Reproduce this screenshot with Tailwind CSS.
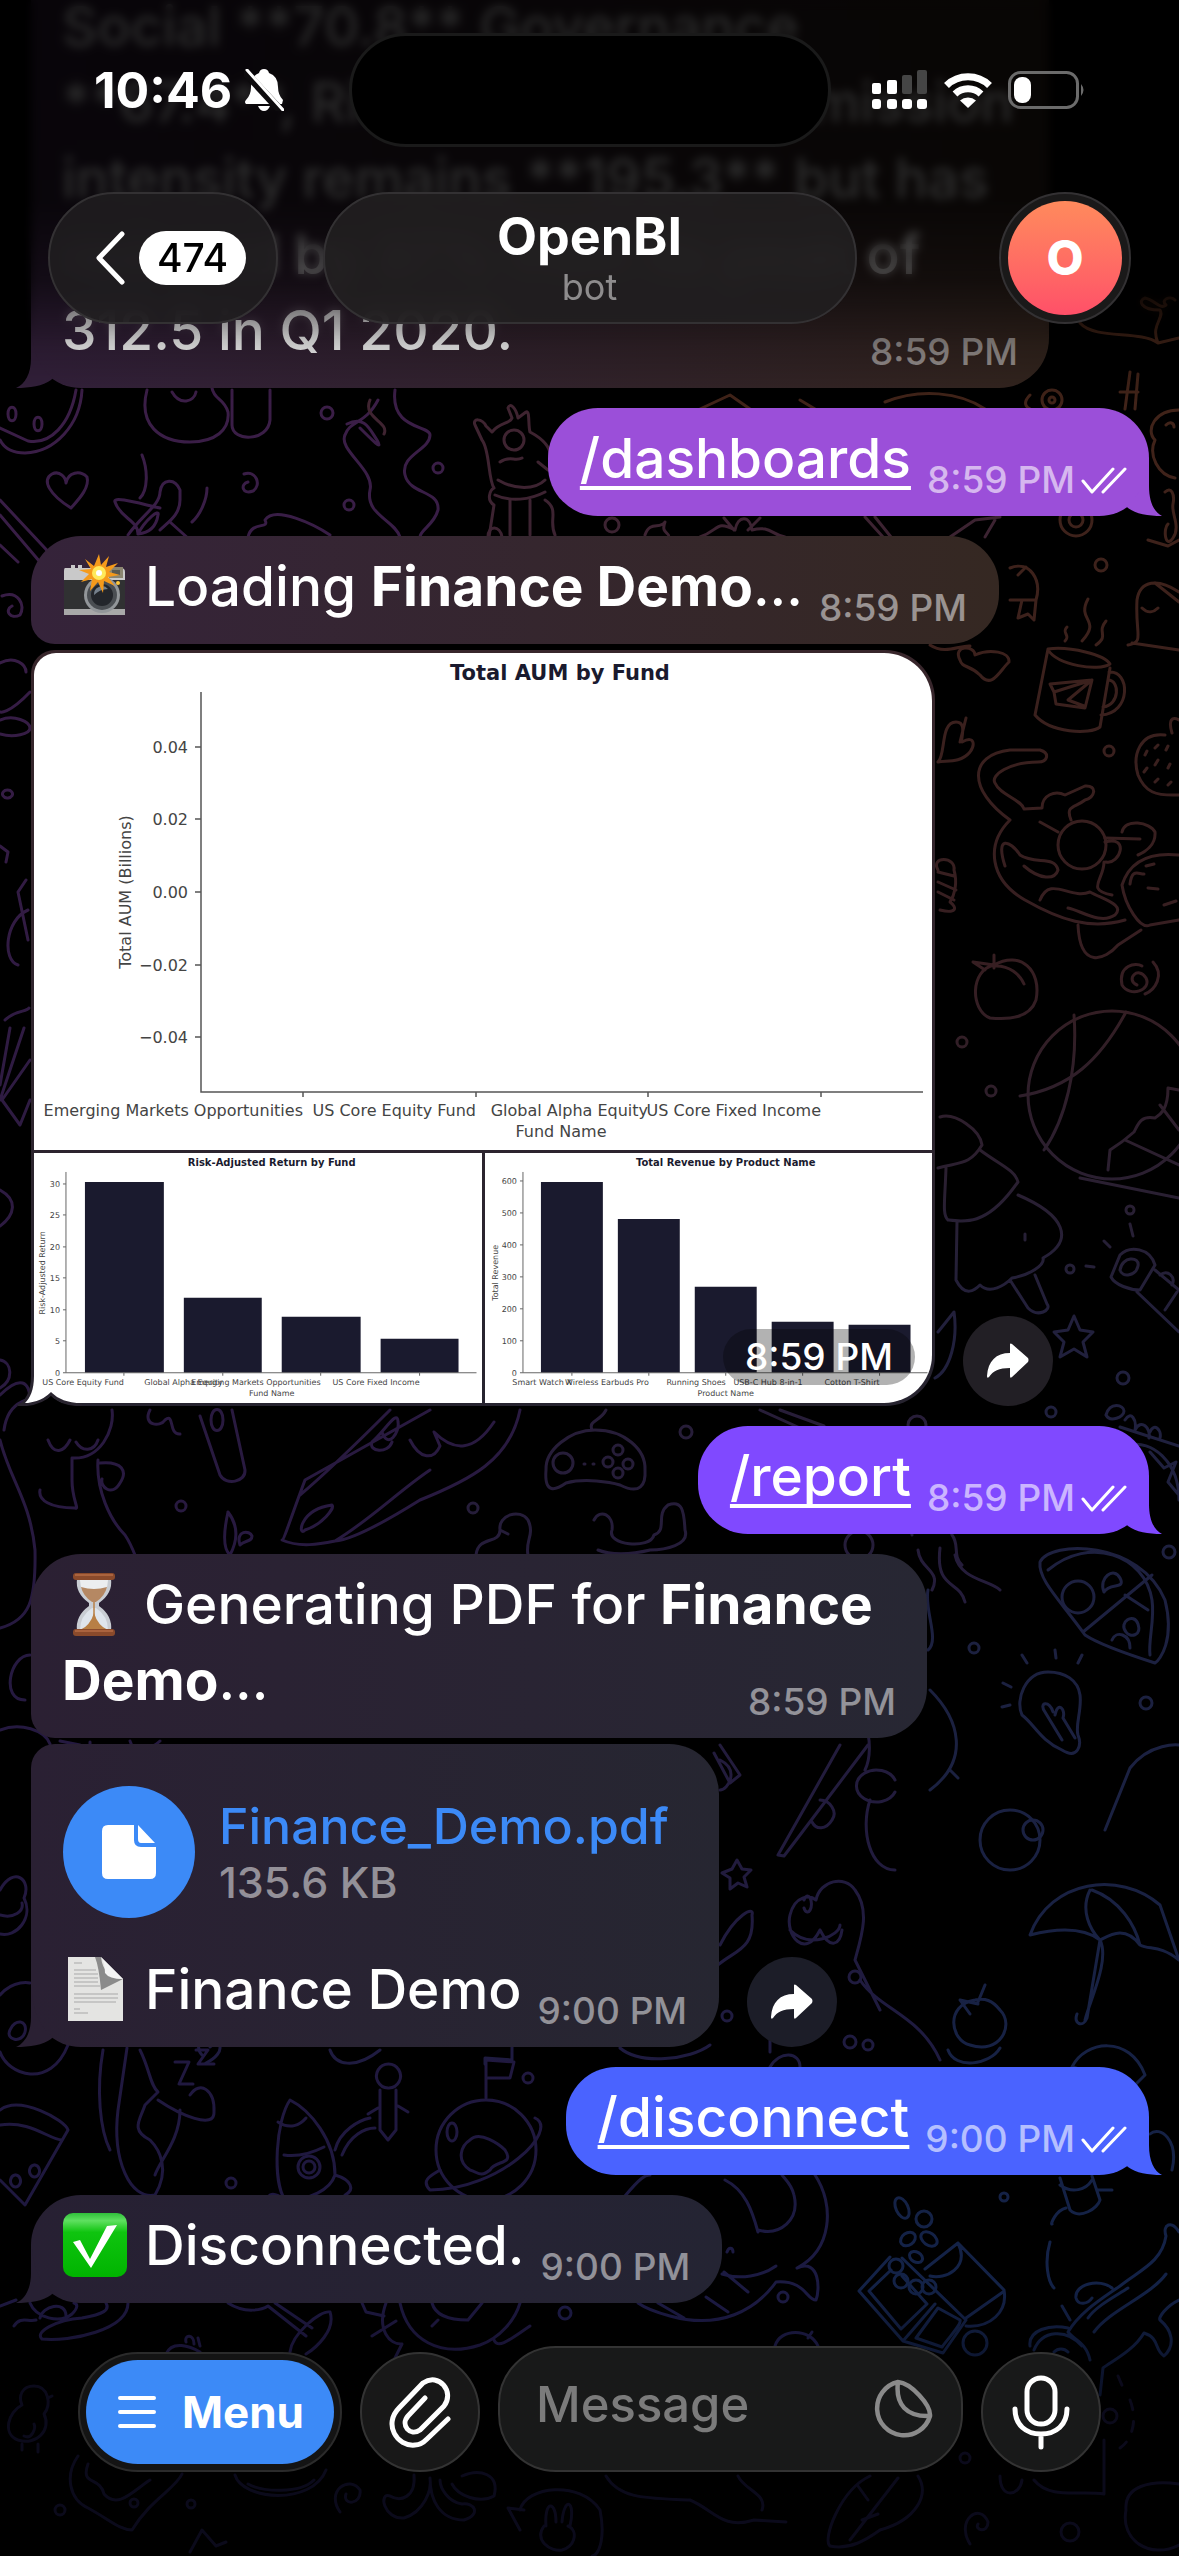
<!DOCTYPE html>
<html lang="en">
<head>
  <meta charset="UTF-8">
  <meta name="viewport" content="width=device-width, initial-scale=1">
  <title>OpenBI</title>
  <script src="https://cdn.jsdelivr.net/npm/@tailwindcss/browser@4"></script>
</head>
<body class="bg-black text-white font-['Inter',sans-serif]">
<div class="relative flex flex-col min-h-screen overflow-hidden">

  <!-- wallpaper -->
  <svg class="absolute inset-0 w-full h-full" viewBox="0 0 1179 2556" preserveAspectRatio="xMidYMin slice" fill="none" stroke-width="3" stroke-linecap="round" stroke-linejoin="round" opacity=".9" aria-hidden="true">
    <defs>
      <linearGradient id="wl" gradientUnits="userSpaceOnUse" x1="0" y1="380" x2="0" y2="2556"><stop offset="0" stop-color="#42224f"/><stop offset=".45" stop-color="#2f1d48"/><stop offset=".88" stop-color="#211b46"/><stop offset="1" stop-color="#050510"/></linearGradient>
      <linearGradient id="wm" gradientUnits="userSpaceOnUse" x1="0" y1="380" x2="0" y2="2556"><stop offset="0" stop-color="#472836"/><stop offset=".5" stop-color="#2b2140"/><stop offset=".88" stop-color="#1f1d4a"/><stop offset="1" stop-color="#050510"/></linearGradient>
      <linearGradient id="wr" gradientUnits="userSpaceOnUse" x1="0" y1="300" x2="0" y2="2556"><stop offset="0" stop-color="#4a281a"/><stop offset=".3" stop-color="#3c2226"/><stop offset=".46" stop-color="#252444"/><stop offset=".88" stop-color="#16264f"/><stop offset=".95" stop-color="#080b1c"/><stop offset="1" stop-color="#03050f"/></linearGradient>
    </defs>
    <g stroke="url(#wl)">
      <path d="M82 390C80 425 55 452 25 453C10 453 3 446 0 440M76 390C70 425 50 445 28 441L0 428M8 414c0-9 8-9 8 0s-8 9-8 0M34 424c0-9 8-9 8 0s-8 9-8 0"/>
      <path d="M147 390C138 425 160 442 190 442C215 442 230 430 228 412C224 398 214 400 212 388M232 390V425C232 442 268 442 270 420V390M172 392c8 14 22 10 24 0"/>
      <circle cx="327" cy="413" r="6"/><circle cx="349" cy="505" r="5"/><circle cx="438" cy="468" r="5"/>
      <path d="M378 400C365 425 350 420 345 435C338 450 375 470 370 490C365 515 395 520 400 537M395 390C390 430 430 425 430 435C430 450 400 455 405 475C410 495 440 490 438 510C434 525 420 530 420 537M347 424C365 415 370 430 377 440C384 452 372 440 360 428"/>
      <path d="M71 508C50 495 41 480 52 474C60 470 66 478 66 483C68 472 80 470 87 477C90 488 78 500 71 508Z"/>
      <path d="M244 474C256 470 262 485 253 491C242 495 240 484 248 482"/>
      <path d="M128 535C142 515 160 505 160 492C162 478 175 478 180 490L180 500C180 515 168 522 160 530M160 508C145 505 112 495 115 502C120 518 138 520 138 534M138 534C145 520 160 508 158 515C156 528 148 533 138 534M142 455C148 470 148 490 140 498M207 488C207 500 200 515 192 522M170 522L190 540"/>
      <path d="M0 500L56 560M0 515L40 562M0 545L18 562"/>
      <path d="M248 537C252 520 270 530 265 520C275 505 315 525 330 535M2 596C18 590 26 605 20 615C10 620 4 610 12 606"/>
      <path d="M0 663C15 655 26 665 26 672M30 692C8 715 0 712 0 712M0 720c14-6 30 2 30 8s-16 10-30 6M8 798a5 4 0 1 0-1 0M0 846l8 6-2 10M26 880L18 892 28 940M28 910C5 920 2 960 18 965M5 1020c10-10 22-8 24-12M10 1028L0 1085M24 1028L0 1100M30 1060L2 1100L20 1125L30 1100"/>
      <path d="M0 1190C18 1200 15 1215 0 1226M0 1360c12 2 14 20 0 28M0 1395c20-20 30-14 30 6M4 1430C8 1400 30 1395 55 1400"/>
      <path d="M0 1440C10 1480 30 1500 35 1550C36 1600 30 1620 0 1628M112 1410C115 1430 100 1460 72 1458V1480C72 1500 80 1510 75 1508C50 1508 38 1500 40 1490M48 1440c6 16 16 12 22 0M76 1442c6 10 18 10 22-2M100 1463c22-2 28 8 20 20c-8 14-20 4-18-4M98 1460C96 1490 110 1520 125 1535C135 1550 140 1570 150 1600"/>
      <path d="M150 1410C142 1425 160 1428 165 1420C175 1412 168 1435 180 1434M200 1416L220 1475C226 1486 246 1482 245 1470L232 1410M211 1420c0-14 12-14 12 0s-12 14-12 0"/>
      <circle cx="181" cy="1506" r="5"/>
      <path d="M430 1410L305 1480C290 1520 284 1540 282 1540C300 1548 320 1544 335 1541C370 1520 400 1490 430 1470M390 1410C360 1440 330 1470 300 1495M520 1410C510 1460 470 1480 420 1500C380 1525 350 1540 335 1541M305 1530C298 1538 298 1510 332 1505C335 1508 322 1525 305 1530M382 1432c6 18 18 0 16-10c0-14-14 10-26 20c-4 10 16 12 20 0M410 1440c10 20 24 20 30 6l-6-14c20 20 40 20 60-10"/>
      <path d="M228 1512C224 1530 222 1548 230 1555C238 1540 238 1525 228 1512M240 1545C235 1530 250 1530 252 1536C252 1542 245 1540 240 1545"/>
      <path d="M30 1655C10 1655 0 1700 25 1700M0 1730c20-8 45 0 50 14M60 1741l20 4M90 1742v20M130 1741c2 10 20 10 30 0"/>
      <path d="M0 1890c14-25 32-10 24 8c10 20-8 40-24 36M0 1915c14 4 24-4 22-12M0 1995c14-16 30-12 30-12M10 2030c5-12 18-10 15 2s-20 8-15-2M0 2052C8 2075 50 2090 68 2045"/>
      <path d="M127 2048L118 2110C112 2160 130 2200 155 2195C170 2170 160 2150 150 2140C130 2130 140 2120 145 2105L158 2092C150 2085 150 2070 140 2050M103 2050C96 2090 100 2130 110 2150M158 2100C180 2115 215 2130 214 2112C215 2090 200 2080 190 2095M180 2110C180 2140 160 2160 155 2175M175 2062h14l-10 22h14M196 2050h12l-10 14h16"/>
      <path d="M0 2110C20 2095 65 2120 68 2130L25 2205L0 2180M0 2125C30 2120 50 2140 62 2140M34 2165a5 6 0 1 0 1 0M15 2175a5 6 0 1 0 1 0"/>
      <path d="M290 2100C276 2120 272 2180 285 2200C310 2200 330 2190 335 2175C335 2140 310 2110 290 2100ZM278 2122C290 2130 300 2125 306 2118M284 2155c14 2 28-2 40-8M335 2175C352 2180 355 2190 345 2195M285 2200C272 2190 268 2195 268 2200"/>
      <circle cx="309" cy="2167" r="11"/><circle cx="309" cy="2167" r="6"/><circle cx="231" cy="2183" r="5"/>
      <path d="M388 2088a12 12 0 1 1 1 0M378 2108l-10 6M398 2106l10 6M380 2090V2130l8 10 8-10V2090M335 2150C340 2130 360 2120 370 2118M342 2155C350 2135 365 2128 375 2128"/>
      <circle cx="486" cy="2150" r="50"/>
      <path d="M486 2098V2060L514 2062L510 2078L488 2078M470 2170C455 2160 462 2145 470 2140C480 2130 500 2145 505 2150C515 2165 495 2160 490 2170C480 2178 478 2172 470 2170M535 2118C560 2130 500 2190 430 2190C420 2180 432 2175 440 2170"/>
      <ellipse cx="452" cy="2132" rx="5" ry="9"/><circle cx="528" cy="2078" r="5"/>
      <path d="M30 2303C36 2318 60 2324 72 2314C78 2308 78 2304 74 2303M40 2318C42 2306 66 2300 66 2316M0 2306L16 2300M14 2326C20 2316 28 2322 36 2320M128 2303C128 2330 70 2342 42 2339C34 2332 56 2320 82 2318C104 2314 110 2310 106 2303M228 2303C245 2314 262 2310 268 2306L306 2336M275 2303L312 2328M290 2352C292 2334 320 2310 330 2312C336 2330 316 2348 306 2354M362 2303L366 2312L384 2316M400 2303C408 2340 440 2358 480 2345C500 2338 515 2320 520 2303M386 2303C376 2330 390 2345 402 2344L394 2360M432 2303C436 2318 456 2320 468 2320L482 2303M372 2336L396 2321M432 2326l6-6M494 2340C498 2350 512 2338 530 2326M166 2354C172 2340 190 2346 200 2352M186 2342C184 2334 194 2334 194 2344M198 2338l2 8"/>
    </g>
    <g stroke="url(#wm)">
      <path d="M489 537L494 505C486 500 490 490 494 488C488 480 490 450 482 440L475 425C472 418 482 418 486 426L492 432C500 422 510 424 512 418L508 408C510 402 516 408 518 418L526 412C530 410 528 425 530 432C545 440 552 450 550 460M495 495C510 502 530 500 545 492M498 480C515 490 535 490 545 480M500 462C510 455 515 462 522 458"/>
      <circle cx="514" cy="440" r="10"/><path d="M538 462l10 8M510 500V535M530 500V535M545 500C560 510 548 520 555 535M488 537c0-12 12-12 14 0M370 400c-8 18 20 22 14 34"/>
      <path d="M645 535C650 520 660 530 665 522C660 535 672 532 668 538M700 537C720 530 715 520 735 530C738 515 750 515 752 530C770 525 772 535 785 537M724 518l10 12M760 518l-12 12M865 517l18 20M875 517l16 20"/>
      <circle cx="612" cy="525" r="7"/>
      <path d="M950 537L975 520L1000 517M985 537L995 520"/>
      <path d="M595 1430C570 1430 545 1450 546 1470C544 1495 556 1490 566 1483C585 1478 610 1482 620 1485C640 1495 646 1485 645 1470C646 1450 625 1430 595 1430ZM592 1430C588 1420 600 1422 606 1410M584 1464h1M593 1464h1"/>
      <circle cx="563" cy="1463" r="10"/><circle cx="618" cy="1450" r="5"/><circle cx="608" cy="1462" r="5"/><circle cx="628" cy="1464" r="5"/><circle cx="618" cy="1473" r="5"/><circle cx="686" cy="1432" r="6"/><circle cx="473" cy="1508" r="5"/>
      <path d="M476 1555C478 1535 500 1545 500 1530C498 1515 520 1508 528 1520C535 1535 525 1540 528 1555M500 1530l8 4M594 1520C600 1508 614 1515 612 1530C606 1545 650 1550 654 1535C668 1530 655 1515 668 1505C682 1500 684 1510 685 1530C690 1545 665 1550 650 1550C630 1555 610 1555 598 1550"/>
      <circle cx="859" cy="1545" r="14"/><path d="M912 1535c-6-30 36-30 40 0c8 10 0 20 10 30M918 1550c2 20 24 20 14 40M940 1548C935 1590 960 1580 965 1602M955 1555C960 1580 990 1580 1000 1590M925 1530h5M940 1530h5M760 1410l40 18M780 1410l44 16"/>
      <circle cx="917" cy="1425" r="9"/>
      <path d="M720 1745l20 30-10 8-16-30M720 1760c20 10 8 30 0 30M840 1745L778 1855L784 1856L800 1835L868 1745M820 1800c10 0 18 12 12 20c-6 10-16 10-20 2M737 1860l5 9 9 1-7 7 3 10-9-4-8 6v-11l-8-5 10-4Z"/>
      <path d="M895 1700C880 1680 850 1690 864 1720C872 1740 870 1760 865 1770M895 1780a20 16 0 1 0 0 12M870 1800C860 1830 870 1870 895 1870"/>
      <path d="M820 1930C805 1960 785 1935 790 1915C795 1895 810 1895 816 1900C820 1880 845 1875 855 1890C870 1910 862 1935 855 1960L880 2010M820 1930C830 1950 840 1945 842 1930M790 1930C810 1950 840 1935 840 1925M804 1900a4 8 0 1 1 0 8M720 1945C735 1915 755 1905 752 1915C755 1950 735 1950 718 1965M770 2052V2010M860 1980C880 2010 920 2015 940 2060"/>
      <circle cx="850" cy="2042" r="6"/><circle cx="868" cy="2045" r="5"/><circle cx="855" cy="1977" r="6"/><circle cx="727" cy="2016" r="5"/>
      <path d="M202 2055c-10-10 5-25 8-8c10-10 18 5-4 16M330 2050c5 15 25 20 50 0M485 2064V2058L512 2060V2047M620 2048C640 2065 690 2060 710 2045M770 2067C780 2050 800 2052 800 2067M625 2196C640 2178 645 2175 650 2175M725 2180C745 2190 752 2210 758 2232M758 2230C780 2236 800 2220 794 2195C792 2185 786 2180 782 2175M815 2175C835 2205 832 2250 797 2268C820 2258 820 2290 816 2300C806 2300 806 2280 776 2282C756 2310 720 2330 670 2316C655 2312 645 2308 638 2303M722 2274C740 2280 762 2276 776 2266M724 2272L748 2292M706 2297L728 2312M658 2303L684 2318M727 2252c2-6 6-4 6 0"/>
      <circle cx="783" cy="2297" r="5"/><circle cx="565" cy="2313" r="6"/><path d="M775 2346C780 2328 810 2328 818 2346M808 2338l4-6"/>
    </g>
    <g stroke="url(#wr)">
      <path d="M1080 323C1095 340 1140 330 1158 343L1179 338M1158 343C1150 325 1165 318 1160 310C1140 310 1138 300 1145 298C1155 300 1160 310 1166 305C1160 300 1170 295 1175 300M1130 372L1125 409M1138 374L1135 409M1120 392h18"/>
      <circle cx="1052" cy="400" r="10"/><circle cx="1052" cy="400" r="3"/><path d="M1030 395c-10 10 0 14 0 14M885 402C920 388 960 392 985 409M700 409l30-14 20 14M800 400l15 9"/>
      <path d="M1179 410C1155 410 1145 430 1155 440C1148 455 1158 475 1175 478M1166 425c4-4 8-2 8 2M1165 492c6-6 10 2 8 12s8 22 0 34s-10-10-5-14"/>
      <circle cx="1076" cy="520" r="16"/><circle cx="1076" cy="520" r="7"/><circle cx="1101" cy="565" r="6"/>
      <path d="M1010 568C1030 560 1042 580 1036 600L1010 600M1018 575l8-8M1022 600l-4 18 10-4 6 6 2-20M1148 540l20 6 11-6"/>
      <path d="M1065 641c6-6-4-8 2-14M1082 641c20-22-6-20 6-42M1096 645c14-10 0-12 10-24M1048 649L1035 715C1050 733 1090 735 1100 727L1110 668M1048 649C1070 646 1105 655 1110 664C1098 672 1058 665 1048 650M1109 672C1130 670 1132 713 1101 715M1108 680C1120 680 1120 705 1103 707M1050 684L1092 680L1085 708L1056 704L1054 692ZM1054 692L1092 680L1068 700L1084 706"/>
      <path d="M1128 645C1145 642 1135 635 1137 600C1140 580 1158 578 1179 592M1132 643L1179 650M1142 608c6 6 12 4 16 0M1155 583L1179 602"/>
      <path d="M930 645C945 655 960 645 970 646M960 660C952 645 975 645 975 655C990 648 1010 652 1009 662C1000 670 992 690 980 675C970 665 962 668 960 660"/>
      <path d="M938 762C946 755 940 722 956 722C968 722 960 740 962 742C975 735 975 745 970 752C960 764 945 760 938 762M960 742L966 718"/>
      <path d="M1010 820C968 790 968 755 1010 750L1040 750C1050 753 1048 762 1038 762C1010 762 990 775 995 783C1000 795 1022 800 1024 809L1042 808C1042 795 1055 790 1065 795L1085 786C1098 785 1095 798 1085 800C1075 808 1065 805 1071 820M1040 822L1058 832M1010 820C985 845 990 880 1025 900C1060 920 1090 930 1125 920M1005 866C995 835 1010 840 1020 855C1035 865 1055 855 1058 870C1055 880 1040 880 1024 866M1040 900C1050 875 1070 900 1090 892C1105 900 1125 905 1115 915C1100 925 1080 910 1068 908M1078 925C1080 970 1105 960 1118 945L1141 930"/>
      <ellipse cx="1082" cy="845" rx="24" ry="24"/><path d="M1105 838L1140 839M1122 832C1125 818 1150 822 1155 832C1156 845 1145 852 1138 855M1105 842C1130 835 1120 865 1106 862M1104 862C1104 880 1085 890 1112 895M1179 855C1150 852 1130 860 1122 885C1125 905 1140 930 1150 925L1179 920M1130 884c2-16 8-10 14-10M1148 888l10 1M1146 866l8-2M1164 905l12-4"/>
      <path d="M1165 735C1140 732 1132 755 1138 775C1145 792 1155 796 1179 795M1172 733C1168 720 1172 716 1179 720M1145 755l2-4M1155 748l3-3M1166 750l2-4M1144 772l3-4M1155 765l3-5M1168 768l2-4M1155 782l3-3M1168 785l3-3"/>
      <path d="M938 870c-8-14 18-14 16 0c4 14 0 26-4 32c8 6 6 12-10 8M938 882l18 8M938 892l16 8M938 872l16 4"/>
      <path d="M994 965C970 970 970 1010 990 1018C1010 1020 1030 1018 1036 1000C1042 970 1020 950 994 965ZM994 955V968M994 966C1010 965 1020 975 1024 984M994 965L973 962L985 970"/>
      <path d="M1137 985C1125 980 1138 965 1146 978C1152 990 1130 998 1122 985C1118 965 1136 962 1142 966M1153 962C1165 975 1155 990 1145 994"/>
      <circle cx="1112" cy="1095" r="84"/><path d="M1074 1015C1078 1070 1065 1120 1044 1150M1020 1096C1070 1088 1100 1060 1126 1012M1179 1090L1168 1088C1168 1110 1160 1115 1155 1118C1140 1115 1138 1125 1134 1132C1125 1140 1118 1145 1110 1150L1108 1170M1125 1140L1179 1165M1080 1178L1179 1198M1160 1105L1179 1130"/>
      <circle cx="962" cy="1042" r="5"/><circle cx="991" cy="1091" r="5"/><circle cx="1109" cy="751" r="5"/><circle cx="1130" cy="1210" r="4"/><circle cx="1070" cy="1269" r="4"/><circle cx="1123" cy="1378" r="6"/><circle cx="1051" cy="1412" r="5"/>
      <path d="M940 1117C955 1112 980 1130 982 1145C970 1165 960 1162 938 1168M946 1168C945 1200 942 1215 948 1220C965 1222 985 1225 1012 1190L1018 1182C1015 1170 1000 1165 980 1150M957 1222L956 1280C965 1298 975 1290 980 1285C990 1295 1005 1285 1012 1278C1030 1275 1045 1265 1043 1258C1075 1240 1065 1215 1018 1195M1010 1280L1028 1308C1038 1318 1052 1310 1047 1304L1035 1275M1025 1234v6"/>
      <path d="M1111 1277L1120 1255C1130 1245 1150 1248 1155 1265L1140 1290C1130 1290 1115 1285 1111 1277ZM1120 1270c2-14 20-14 18-4s-16 12-18 4M1155 1270L1179 1290M1137 1292L1179 1332M1160 1275c8-6 16 2 12 10M1165 1310l12-18M1094 1267l-8-1M1110 1247l-6-6M1133 1236l-3-12"/>
      <path d="M1074 1316l6 14 13 2-10 10 4 15-13-8-14 8 4-15-10-10 14-2Z"/>
      <path d="M938 1332L954 1312C958 1340 950 1370 935 1378M1106 1415c4-14 18-10 18-4s-14 12-18 4M1125 1420c6-10 12 0 10 10M1135 1430c6-12 16-2 14 8M1150 1432c4-10 12-2 10 6"/>
      <path d="M1120 1427L1179 1446M1130 1445C1150 1440 1179 1460 1179 1500M1150 1452l14 16 12-6-8 20 10 12"/>
      <path d="M1040 1562C1050 1540 1140 1540 1165 1600C1175 1640 1160 1660 1155 1663C1130 1655 1100 1645 1085 1635C1060 1600 1038 1580 1040 1562ZM1048 1570C1090 1535 1145 1555 1152 1600C1155 1620 1148 1640 1150 1655M1083 1632L1152 1575M1125 1595L1148 1610"/>
      <circle cx="1078" cy="1597" r="16"/><path d="M1104 1592c-6-14 10-26 16-14s-10 4-16 14M1126 1632c-8-10 8-20 12-8s-8 14-12 8M1112 1640c4-10 18-6 18 8"/>
      <circle cx="974" cy="1648" r="5"/><circle cx="1169" cy="1552" r="6"/><circle cx="1146" cy="1703" r="6"/>
      <path d="M1048 1672C1025 1672 1015 1700 1022 1715C1035 1725 1040 1740 1062 1750C1078 1760 1082 1745 1078 1735C1075 1725 1082 1710 1080 1695C1078 1680 1065 1672 1048 1672ZM1062 1740L1045 1712C1038 1702 1050 1700 1053 1712M1055 1715C1058 1700 1066 1710 1063 1718L1075 1738M1003 1683l8 4M1002 1707l8-2M1022 1655l5 8M1055 1650l1 8M1082 1655l-4 8"/>
      <path d="M928 1650c12-10-4-40 0-60M930 1690C960 1720 970 1760 930 1790M950 1770l8 8"/>
      <circle cx="1010" cy="1840" r="30"/><circle cx="1033" cy="1830" r="10"/><path d="M1105 1830L1130 1768C1150 1742 1179 1745 1179 1745"/>
      <path d="M1030 1935C1050 1880 1120 1870 1160 1905L1179 1960C1160 1945 1150 1950 1140 1945C1125 1925 1110 1935 1100 1940C1080 1925 1050 1930 1030 1935ZM1090 1890C1080 1910 1090 1930 1100 1940C1110 1960 1090 2000 1085 2020M1092 1890C1120 1900 1135 1925 1140 1945M1100 1940L1087 2018c-4 10-14 6-10-4"/>
      <path d="M975 2000C945 2005 950 2040 970 2045C1000 2055 1015 2025 1000 2010C992 2000 985 1998 975 2000ZM978 2002L985 1985M978 2004l-18-4 10 14"/>
      <path d="M1072 2067C1085 2040 1130 2035 1145 2075L1130 2090C1120 2080 1100 2075 1072 2067M948 2050C955 2070 990 2065 1000 2048M1150 2134C1160 2125 1179 2140 1172 2170M1060 2178L1070 2210C1080 2220 1098 2208 1100 2200L1092 2176M1060 2185C1072 2194 1086 2190 1092 2180M1098 2190h14M1066 2208C1056 2210 1050 2225 1052 2224M1050 2242C1044 2262 1048 2282 1054 2288M1062 2306l8 14"/>
      <circle cx="1004" cy="2197" r="4"/><ellipse cx="902" cy="2208" rx="6" ry="11" transform="rotate(-25 902 2208)"/><ellipse cx="924" cy="2219" rx="8" ry="8"/><ellipse cx="908" cy="2239" rx="8" ry="6" transform="rotate(-35 908 2239)"/><ellipse cx="929" cy="2239" rx="9" ry="6" transform="rotate(35 929 2239)"/><ellipse cx="916" cy="2257" rx="7" ry="5" transform="rotate(30 916 2257)"/>
      <path d="M890 2257L859 2291L903 2341L943 2353L966 2320L902 2258M891 2270L869 2291L901 2329L927 2304L902 2276M903 2341L935 2304M938 2308L960 2320C962 2324 950 2336 942 2347L916 2338ZM925 2269L958 2243L1004 2290C1008 2312 990 2328 966 2326M958 2243C970 2268 945 2280 930 2276M1003 2292L966 2318"/>
      <circle cx="896" cy="2266" r="7"/><circle cx="901" cy="2281" r="7"/><circle cx="916" cy="2287" r="7"/><circle cx="929" cy="2287" r="7"/><circle cx="975" cy="2343" r="12"/>
      <path d="M1179 2232C1172 2220 1162 2224 1166 2236C1162 2262 1140 2270 1120 2286C1100 2300 1080 2312 1068 2332C1074 2340 1086 2342 1090 2360M1112 2288C1100 2278 1074 2284 1076 2298C1078 2306 1088 2304 1092 2298M1166 2274C1150 2296 1110 2310 1094 2332M1128 2288C1116 2296 1096 2306 1088 2318M1179 2300C1166 2306 1158 2318 1160 2320C1172 2330 1176 2345 1164 2356C1154 2350 1160 2338 1144 2333C1134 2350 1114 2360 1103 2368L1100 2395M1068 2328C1050 2324 1028 2330 1030 2346M1034 2350C1042 2330 1066 2328 1082 2346M1054 2352c4-4 10-4 14 0"/>
    </g>
    <!-- faded drawings under the input bar -->
    <g stroke="#0d0c1e">
      <path d="M22 2405C8 2412 2 2434 18 2440C36 2446 52 2430 44 2414C52 2404 48 2386 34 2386C22 2386 18 2396 22 2405ZM52 2396l-4 2M22 2444v6M38 2444v8M24 2436C32 2440 36 2428 34 2424"/>
      <path d="M78 2456C64 2476 70 2500 88 2508C110 2520 120 2530 132 2530C150 2500 176 2488 182 2474M88 2464C80 2486 100 2476 104 2494C118 2510 134 2490 150 2480M235 2475C242 2500 312 2506 326 2470M248 2484C262 2492 300 2494 314 2480M340 2512C325 2490 350 2475 360 2490C362 2505 342 2506 346 2494"/>
      <path d="M414 2475C416 2498 400 2502 390 2496C378 2492 384 2520 404 2518C424 2512 432 2490 430 2478C430 2500 440 2520 464 2520C482 2514 474 2502 462 2504C448 2502 440 2488 440 2480M462 2476C480 2468 500 2474 494 2496C480 2504 458 2496 452 2484"/>
      <path d="M520 2510C526 2486 580 2480 600 2510C606 2540 598 2556 592 2556M524 2510L508 2508L520 2530M546 2526C544 2500 556 2500 556 2522M562 2522C564 2496 576 2500 570 2526M544 2526C534 2540 550 2552 562 2550C576 2546 578 2530 568 2526"/>
      <path d="M606 2476C620 2500 650 2498 690 2500C714 2510 722 2530 754 2520L786 2522M738 2476C744 2490 768 2494 762 2510M870 2476C840 2490 822 2540 830 2546C850 2550 866 2540 880 2530C916 2520 930 2495 918 2476M898 2478L850 2540M868 2500l-10-14M862 2520l16-6M970 2544C955 2520 980 2502 988 2522C988 2534 974 2530 978 2524M1000 2476C1000 2500 1020 2496 1022 2480M1034 2480C1050 2500 1080 2490 1104 2494V2440M1126 2510C1124 2486 1150 2480 1179 2484M1126 2510C1120 2540 1150 2560 1179 2545M190 2552l12-22 14 16 10-4"/>
      <path d="M1118 2376l6 14M1130 2400C1138 2420 1132 2440 1120 2448" stroke-dasharray="10 12"/>
      <circle cx="60" cy="2510" r="5"/><circle cx="134" cy="2503" r="4"/><circle cx="191" cy="2504" r="4"/><circle cx="1070" cy="2532" r="9"/><circle cx="965" cy="2458" r="5"/><circle cx="1110" cy="2416" r="7"/>
    </g>
  </svg>

  <!-- conversation -->
  <main class="relative flex flex-1 flex-col gap-5 pl-[31px] pr-[30px] text-[55px] leading-[76px] font-medium">

    <article class="relative -mt-3 w-[1018px] max-w-full rounded-b-[50px] bg-linear-to-r from-[#34213c] to-[#33251e] px-[31px] pb-5 text-white">
      <div>Social **70.8** Governance</div>
      <div>**67.4**, Risk 21.6. Carbon emission</div>
      <div>intensity remains **195.3** but has</div>
      <div>reduced by 37% from its peak of</div>
      <div class="flex items-end justify-between">
        <span>312.5 in Q1 2020.</span>
        <time class="-mb-1 text-[37px] leading-10 text-white/50">8:59 PM</time>
      </div>
      <svg class="absolute bottom-0 -left-[15px] h-[54px] w-[69px]" viewBox="0 0 69 54" fill="#34213c" aria-hidden="true"><path d="M15 0V24C15 40 9 50 0 54C14 54 27 52 35 46L37 44C27 36 18 24 16 0Z"/></svg>
    </article>

    <article class="relative flex items-end gap-4 self-end rounded-[50px] bg-[#9b4fd9] pt-3 pb-5 pl-8 pr-[22px]">
      <a href="#dashboards" class="underline decoration-4 underline-offset-8">/dashboards</a>
      <span class="-mb-1 flex items-center gap-1.5 text-[37px] leading-10 text-white/60"><time>8:59 PM</time>
        <svg class="h-7 w-[46px] text-white" viewBox="0 0 46 28" fill="none" stroke="currentColor" stroke-width="3" stroke-linecap="round" stroke-linejoin="round" aria-label="Read"><path d="M2 15L11 26L32 3M22 26L44 3"/></svg></span>
      <svg class="absolute bottom-0 -right-[13px] h-[54px] w-[69px]" viewBox="0 0 69 54" fill="#9b4fd9" aria-hidden="true"><path d="M56 0V24C56 40 61 50 69 54C55 54 43 52 35 46L33 44C43 36 54 24 55 0Z"/></svg>
    </article>

    <div class="flex flex-col items-start gap-1.5">
      <article class="flex items-end gap-4 rounded-[50px] rounded-bl-3xl bg-linear-to-r from-[#35233a] to-[#352822] px-8 pt-3 pb-5">
        <div class="flex items-center gap-[18px]">
          <svg class="h-16 w-16" viewBox="0 0 64 64" role="img" aria-label="Camera with flash">
            <path d="M2 14h6v-3h4v3h3v-3h4v3h39q4 0 4 4v40q0 3-3 3H4q-3 0-3-3V17q0-3 1-3Z" fill="#c9c9c9"/>
            <path d="M1 26h61v30H1z" fill="#303132"/><path d="M1 55h61v6H1z" fill="#a8a8a8"/><path d="M46 13h14v11H46z" fill="#8a8570"/><path d="M49 16h8v5h-8z" fill="#5b5a50"/>
            <circle cx="39" cy="41" r="18" fill="#929699"/><circle cx="39" cy="41" r="15" fill="#4a4e52"/><circle cx="39" cy="41" r="11" fill="#23262b"/><path d="M31 41a8 8 0 0 1 14-6q-8 0-14 6Z" fill="#75808b"/>
            <path d="M36 0l2 11 8-9-3 11 12-4-9 9 11 3-12 2 7 9-11-5-1 12-5-11-8 9 2-12-11 3 8-8-10-4 12-1-6-10 9 7Z" fill="#f59a1b"/><circle cx="36" cy="19" r="7" fill="#ffe95a"/><circle cx="36" cy="19" r="3" fill="#fff"/><circle cx="55" cy="29" r="2" fill="#ffc83d"/>
          </svg>
          <span>Loading <b class="font-bold">Finance Demo</b>...</span>
        </div>
        <time class="-mb-1 text-[37px] leading-10 text-white/50">8:59 PM</time>
      </article>

      <div class="flex items-end gap-7">
        <figure class="relative flex w-[904px] flex-col gap-[3px] rounded-t-[50px] rounded-br-[50px] rounded-tl-3xl bg-linear-to-b from-[#38262b] to-[#26232f] p-[3px]">
          <svg class="w-full rounded-tl-[22px] rounded-tr-[48px] bg-white font-['DejaVu_Sans',sans-serif] font-normal" viewBox="0 0 898 497" font-size="16" fill="#444" role="img" aria-label="Total AUM by Fund">
            <text x="526" y="27" font-size="21" font-weight="700" fill="#1a1a2e" text-anchor="middle">Total AUM by Fund</text>
            <path d="M167 39V439H889M161 94h6M161 166h6M161 239h6M161 312h6M161 384h6M269 439v5M442 439v5M614 439v5M787 439v5" fill="none" stroke="#555" stroke-width="1.5"/>
            <g text-anchor="end">
              <text x="154" y="100">0.04</text><text x="154" y="172">0.02</text><text x="154" y="245">0.00</text><text x="154" y="318">−0.02</text><text x="154" y="390">−0.04</text>
              <text x="269" y="463">Emerging Markets Opportunities</text><text x="442" y="463">US Core Equity Fund</text><text x="614" y="463">Global Alpha Equity</text><text x="787" y="463">US Core Fixed Income</text>
            </g>
            <text x="527" y="484" text-anchor="middle">Fund Name</text>
            <text transform="translate(97 239) rotate(-90)" text-anchor="middle">Total AUM (Billions)</text>
          </svg>
          <div class="flex gap-[3px]">
            <svg class="min-w-0 flex-1 bg-white font-['DejaVu_Sans',sans-serif] font-normal" viewBox="0 0 448 250" font-size="8" fill="#444" role="img" aria-label="Risk-Adjusted Return by Fund">
              <text x="238" y="13" font-size="10" font-weight="700" fill="#1a1a2e" text-anchor="middle">Risk-Adjusted Return by Fund</text>
              <path d="M51 29h79v191H51zM150 145h78v75h-78zM248 164h79v56h-79zM347 186h78v34h-78z" fill="#1a1a2e"/>
              <path d="M32 19V220H443M29 31h3M29 62h3M29 94h3M29 125h3M29 157h3M29 188h3M29 220h3M90 220v3M189 220v3M287 220v3M386 220v3" fill="none" stroke="#666"/>
              <g text-anchor="end">
                <text x="26" y="34">30</text><text x="26" y="65">25</text><text x="26" y="97">20</text><text x="26" y="128">15</text><text x="26" y="160">10</text><text x="26" y="191">5</text><text x="26" y="223">0</text>
                <text x="90" y="232">US Core Equity Fund</text><text x="189" y="232">Global Alpha Equity</text><text x="287" y="232">Emerging Markets Opportunities</text><text x="386" y="232">US Core Fixed Income</text>
              </g>
              <text x="238" y="243" text-anchor="middle">Fund Name</text>
              <text transform="translate(11 120) rotate(-90)" text-anchor="middle">Risk-Adjusted Return</text>
            </svg>
            <svg class="min-w-0 flex-1 rounded-br-[48px] bg-white font-['DejaVu_Sans',sans-serif] font-normal" viewBox="0 0 448 250" font-size="8" fill="#444" role="img" aria-label="Total Revenue by Product Name">
              <text x="241" y="13" font-size="10" font-weight="700" fill="#1a1a2e" text-anchor="middle">Total Revenue by Product Name</text>
              <path d="M56 29h62v191H56zM133 66h62v154h-62zM210 134h62v86h-62zM287 169h62v51h-62zM364 172h62v48h-62z" fill="#1a1a2e"/>
              <path d="M38 19V220H443M35 28h3M35 60h3M35 92h3M35 124h3M35 156h3M35 188h3M35 220h3M87 220v3M164 220v3M241 220v3M318 220v3M395 220v3" fill="none" stroke="#666"/>
              <g text-anchor="end">
                <text x="32" y="31">600</text><text x="32" y="63">500</text><text x="32" y="95">400</text><text x="32" y="127">300</text><text x="32" y="159">200</text><text x="32" y="191">100</text><text x="32" y="223">0</text>
                <text x="87" y="232">Smart Watch X</text><text x="164" y="232">Wireless Earbuds Pro</text><text x="241" y="232">Running Shoes</text><text x="318" y="232">USB-C Hub 8-in-1</text><text x="395" y="232">Cotton T-Shirt</text>
              </g>
              <text x="241" y="243" text-anchor="middle">Product Name</text>
              <text transform="translate(13 120) rotate(-90)" text-anchor="middle">Total Revenue</text>
            </svg>
          </div>
          <!-- tail with its notch -->
          <svg class="absolute bottom-0 -left-[15px] h-[54px] w-[69px]" viewBox="0 0 69 54" aria-hidden="true"><path d="M15 0V24C15 40 9 50 0 54H18V0Z" fill="#29242f"/><path d="M18 0V24C18 38 14 46 9 51H22V0Z" fill="#fff"/><path d="M0 54C14 53 27 51 35 43C42 50 50 53 64 54Z"/><path d="M2 53C14 53 27 50 35 42C42 49 50 52 66 53" fill="none" stroke="#29242f" stroke-width="3"/></svg>
          <time class="absolute right-5 bottom-[21px] rounded-full bg-black/30 px-[22px] py-2 text-[37px] leading-10">8:59 PM</time>
        </figure>
        <button type="button" aria-label="Share photo" class="flex h-[90px] w-[90px] items-center justify-center rounded-full bg-[#221f25]">
          <svg class="h-9 w-11" viewBox="0 0 44 36" fill="#fff"><path d="M24 1.500Q24 0 26 1L42 15Q43 17 42 19L26 34Q24 36 24 33V25C13 25 7 28 3 34Q1 36 1 33C2 18 10 10 24 10Z"/></svg>
        </button>
      </div>
    </div>

    <article class="relative flex items-end gap-4 self-end rounded-[50px] bg-[#8049ff] pt-3 pb-5 pl-8 pr-[22px]">
      <a href="#report" class="underline decoration-4 underline-offset-8 [text-decoration-skip-ink:none]">/report</a>
      <span class="-mb-1 flex items-center gap-1.5 text-[37px] leading-10 text-white/60"><time>8:59 PM</time>
        <svg class="h-7 w-[46px] text-white" viewBox="0 0 46 28" fill="none" stroke="currentColor" stroke-width="3" stroke-linecap="round" stroke-linejoin="round" aria-label="Read"><path d="M2 15L11 26L32 3M22 26L44 3"/></svg></span>
      <svg class="absolute bottom-0 -right-[13px] h-[54px] w-[69px]" viewBox="0 0 69 54" fill="#8049ff" aria-hidden="true"><path d="M56 0V24C56 40 61 50 69 54C55 54 43 52 35 46L33 44C43 36 54 24 55 0Z"/></svg>
    </article>

    <div class="flex flex-col items-start gap-1.5">
      <article class="w-[896px] rounded-[50px] rounded-bl-3xl bg-linear-to-r from-[#2b2033] to-[#272733] px-[31px] pt-3 pb-5">
        <div class="flex items-center gap-[18px]">
          <svg class="h-16 w-16" viewBox="0 0 64 64" role="img" aria-label="Hourglass">
            <path d="M15 7h34q2 14-12 24v3q14 10 12 25H15q-2-15 12-25v-3Q13 21 15 7Z" fill="#c9cdd3"/><path d="M18 8h28q0 13-12 22h-4Q18 21 18 8Z" fill="#eceef0"/><path d="M19 15q13 4 26 0q-2 9-11 15h-4q-9-6-11-15Z" fill="#b58863"/><path d="M18 58q0-14 12-22h4q12 8 12 22Z" fill="#dfe5ec"/><path d="M18 58q10-4 14-17q4 13 14 17Z" fill="#b87f45"/><path d="M32 30v14" stroke="#b87f45" stroke-width="1.500"/>
            <rect x="11" y="1" width="42" height="7" rx="3" fill="#8a4a2b"/><rect x="11" y="57" width="42" height="7" rx="3" fill="#8a4a2b"/><path d="M13 3h38M13 59h38" stroke="#b56c45" stroke-width="1.500"/>
          </svg>
          <span>Generating PDF for <b class="font-bold">Finance</b></span>
        </div>
        <div class="flex items-end justify-between">
          <span><b class="font-bold">Demo</b>...</span>
          <time class="-mb-1 text-[37px] leading-10 text-white/50">8:59 PM</time>
        </div>
      </article>

      <div class="flex items-end gap-7">
        <article class="relative rounded-[50px] rounded-tl-3xl bg-linear-to-r from-[#2a2033] to-[#262631] px-8 pt-[42px] pb-5">
          <div class="flex items-center gap-6">
            <span class="flex h-[132px] w-[132px] items-center justify-center rounded-full bg-[#3c8af7]">
              <svg class="h-[54px] w-[54px]" viewBox="0 0 54 54" fill="#fff" aria-hidden="true"><path d="M5 0H32V15Q32 22 39 22H54V48Q54 54 48 54H6Q0 54 0 48V6Q0 0 6 0ZM36 0L53 18H39Q36 18 36 14Z"/></svg>
            </span>
            <span class="flex flex-col">
              <a href="#pdf" class="text-[50px] leading-[60px] text-[#3c8af7]">Finance_Demo.pdf</a>
              <span class="text-[43px] leading-[52px] text-white/50">135.6 KB</span>
            </span>
          </div>
          <div class="flex items-end gap-4 pt-[33px]">
            <div class="flex items-center gap-[18px]">
              <svg class="h-16 w-16" viewBox="0 0 64 64" role="img" aria-label="Page facing up">
                <path d="M5 0H38L60 22V64H5Z" fill="#e4e4e2"/><path d="M38 0Q40 20 60 22L38 33Q36 10 32 0Z" fill="#8b8b8b"/><path d="M38 0Q48 10 60 22Q46 22 42 16Q42 6 38 0Z" fill="#f4f4f4"/>
                <path d="M11 6h8M11 13h22M11 17h24M11 21h24M11 25h24M11 29h26M11 37h44M11 41h44M11 45h42M11 52h6M11 56h14" stroke="#bcbcbc" stroke-width="1.500"/>
              </svg>
              <span>Finance Demo</span>
            </div>
            <time class="-mb-1 text-[37px] leading-10 text-white/50">9:00 PM</time>
          </div>
          <svg class="absolute bottom-0 -left-[15px] h-[54px] w-[69px]" viewBox="0 0 69 54" fill="#2a2033" aria-hidden="true"><path d="M15 0V24C15 40 9 50 0 54C14 54 27 52 35 46L37 44C27 36 18 24 16 0Z"/></svg>
        </article>
        <button type="button" aria-label="Share file" class="flex h-[90px] w-[90px] items-center justify-center rounded-full bg-[#1c1d28]">
          <svg class="h-9 w-11" viewBox="0 0 44 36" fill="#fff"><path d="M24 1.500Q24 0 26 1L42 15Q43 17 42 19L26 34Q24 36 24 33V25C13 25 7 28 3 34Q1 36 1 33C2 18 10 10 24 10Z"/></svg>
        </button>
      </div>
    </div>

    <article class="relative flex items-end gap-4 self-end rounded-[50px] bg-[#4a63ff] pt-3 pb-5 pl-8 pr-[22px]">
      <a href="#disconnect" class="underline decoration-4 underline-offset-8">/disconnect</a>
      <span class="-mb-1 flex items-center gap-1.5 text-[37px] leading-10 text-white/60"><time>9:00 PM</time>
        <svg class="h-7 w-[46px] text-white" viewBox="0 0 46 28" fill="none" stroke="currentColor" stroke-width="3" stroke-linecap="round" stroke-linejoin="round" aria-label="Read"><path d="M2 15L11 26L32 3M22 26L44 3"/></svg></span>
      <svg class="absolute bottom-0 -right-[13px] h-[54px] w-[69px]" viewBox="0 0 69 54" fill="#4a63ff" aria-hidden="true"><path d="M56 0V24C56 40 61 50 69 54C55 54 43 52 35 46L33 44C43 36 54 24 55 0Z"/></svg>
    </article>

    <article class="relative flex items-end gap-4 self-start rounded-[50px] bg-linear-to-r from-[#272033] to-[#242433] px-8 pt-3 pb-5">
      <div class="flex items-center gap-[18px]">
        <svg class="h-16 w-16" viewBox="0 0 64 64" role="img" aria-label="Check mark">
          <defs><linearGradient id="ck" x1="0" y1="0" x2="0" y2="1"><stop offset="0" stop-color="#2fbf3a"/><stop offset=".12" stop-color="#5fe060"/><stop offset=".3" stop-color="#0fc40f"/><stop offset="1" stop-color="#00b400"/></linearGradient></defs>
          <rect width="64" height="64" rx="10" fill="url(#ck)"/><path d="M10 29L17 27L27 46L44 13L54 12L28 55Z" fill="#fff"/>
        </svg>
        <span>Disconnected.</span>
      </div>
      <time class="-mb-1 text-[37px] leading-10 text-white/50">9:00 PM</time>
      <svg class="absolute bottom-0 -left-[15px] h-[54px] w-[69px]" viewBox="0 0 69 54" fill="#272033" aria-hidden="true"><path d="M15 0V24C15 40 9 50 0 54C14 54 27 52 35 46L37 44C27 36 18 24 16 0Z"/></svg>
    </article>
  </main>

  <!-- input bar -->
  <footer class="relative flex items-end gap-[18px] px-[78px] pb-[84px] pt-[43px]">
    <div class="rounded-full border-2 border-[#2b2b2b] bg-[#141414] p-1.5">
      <button type="button" class="flex h-[104px] items-center gap-[26px] rounded-full bg-[#3c8af7] pl-8 pr-[30px] text-[44px] font-bold">
        <svg class="h-8 w-[38px]" viewBox="0 0 38 32" fill="none" stroke="#fff" stroke-width="4" stroke-linecap="round" aria-hidden="true"><path d="M2 2h34M2 16h34M2 30h34"/></svg>
        Menu
      </button>
    </div>
    <button type="button" aria-label="Attach" class="flex h-[120px] w-[120px] shrink-0 items-center justify-center rounded-full border-2 border-[#333] bg-[#181818]">
      <svg class="h-[72px] w-[62px]" viewBox="0 0 62 72" fill="none" stroke="#fff" stroke-width="5" stroke-linecap="round"><path d="M36 22L19 40C11 49 21 61 31 54L55 30C66 16 50-4 34 7L10 32C-6 48 8 71 26 69C30 69 34 67 38 63L59 43"/></svg>
    </button>
    <label class="flex h-[126px] min-w-0 flex-1 items-center gap-4 rounded-[58px] border-2 border-[#333] bg-[#181919] pl-9 pr-7">
      <input type="text" aria-label="Message" placeholder="Message" class="min-w-0 flex-1 bg-transparent pb-2 text-[49px] font-medium text-white outline-none placeholder:text-[#7b7b7b]">
      <svg class="h-[60px] w-[60px] shrink-0" viewBox="0 0 60 60" fill="none" stroke="#8a8a8a" stroke-width="4.500" stroke-linecap="round" aria-hidden="true"><path d="M25 3A27 27 0 1 0 57 37C58 26 38 4 25 3ZM25 3C22 26 34 38 57 37"/></svg>
    </label>
    <button type="button" aria-label="Voice message" class="flex h-[120px] w-[120px] shrink-0 items-center justify-center rounded-full border-2 border-[#333] bg-[#181919]">
      <svg class="h-[75px] w-[58px]" viewBox="0 0 58 75" fill="none" stroke="#fff" stroke-width="5" stroke-linecap="round"><rect x="15" y="3" width="28" height="46" rx="14"/><path d="M3 34C3 50 14 59 29 59C44 59 55 50 55 34M29 59V72"/></svg>
    </button>
  </footer>

  <!-- shade and blur behind the header -->
  <div class="absolute inset-x-0 top-0 h-[340px] backdrop-blur-[5px] [mask-image:linear-gradient(to_bottom,black_70%,transparent)]"></div>
  <div class="absolute inset-x-0 top-0 h-[400px] bg-[linear-gradient(to_bottom,rgba(0,0,0,.84)_0%,rgba(0,0,0,.82)_50%,rgba(0,0,0,.62)_70%,rgba(0,0,0,.2)_87%,transparent)]"></div>

  <header class="absolute inset-x-0 top-0">
    <div class="grid grid-cols-[1fr_auto_1fr] items-center pt-[33px]">
      <div class="flex items-center gap-3 pl-[94px]">
        <time class="text-[50px] leading-[60px] font-bold">10:46</time>
        <svg class="h-[42px] w-10" viewBox="0 0 40 42" fill="#fff" aria-label="Silent"><path d="M20 0q4 0 5 4 9 3 9 14 0 8 5 13L38 35H2Q0 33 2 31q5-5 5-13Q7 7 15 4q1-4 5-4ZM14 37h12q-2 5-6 5t-6-5Z"/><path d="M0 2L37 42" stroke="#0d0b0d" stroke-width="8"/><path d="M3 1L39 41" stroke="#fff" stroke-width="3" stroke-linecap="round"/></svg>
      </div>
      <div class="h-[114px] w-[482px] rounded-full border-[3px] border-[#1a1a1a] bg-black"></div>
      <div class="flex items-center justify-end gap-4 pr-[91px]">
        <svg class="h-10 w-[56px]" viewBox="0 0 56 40" fill="#fff" aria-label="Signal"><rect y="13" width="9" height="11" rx="2"/><rect x="15" y="10" width="10" height="14" rx="2"/><rect x="30" y="5" width="10" height="19" rx="2" fill="#454545"/><rect x="45" y="0" width="10" height="24" rx="2" fill="#454545"/><rect y="29" width="9" height="10" rx="3"/><rect x="15" y="29" width="10" height="10" rx="3"/><rect x="30" y="29" width="10" height="10" rx="3"/><rect x="45" y="29" width="10" height="10" rx="3"/></svg>
        <svg class="h-[36px] w-[48px]" viewBox="0 0 48 36" fill="none" stroke="#fff" stroke-width="7" aria-label="Wi-Fi"><path d="M2.500 13.500A31 31 0 0 1 45.500 13.500M11 22A19 19 0 0 1 37 22"/><path d="M24 36L16 28.500A12 12 0 0 1 32 28.500Z" fill="#fff" stroke="none"/></svg>
        <svg class="h-[38px] w-20" viewBox="0 0 80 38" aria-label="Battery"><rect x="1.500" y="1.500" width="68" height="35" rx="11" fill="none" stroke="#6b6b6b" stroke-width="3"/><rect x="6" y="6" width="17" height="26" rx="8" fill="#fff"/><path d="M73 13q5 6 0 12Z" fill="#6b6b6b"/></svg>
      </div>
    </div>
    <nav class="grid grid-cols-[1fr_auto_1fr] items-center px-12 pt-[45px]">
      <button type="button" aria-label="Back, 474 unread" class="flex h-[132px] items-center gap-3.5 justify-self-start rounded-full border-2 border-[#333133] bg-[#1f1d1f]/90 pl-[46px] pr-[30px] backdrop-blur-md">
        <svg class="h-[54px] w-[29px]" viewBox="0 0 29 54" fill="none" stroke="#fff" stroke-width="5" stroke-linecap="round" stroke-linejoin="round"><path d="M26 3L3 27L26 51"/></svg>
        <span class="rounded-full bg-white px-[18px] text-[39px] leading-[54px] font-medium text-black">474</span>
      </button>
      <button type="button" class="flex h-[132px] w-[534px] flex-col items-center justify-center rounded-full border-2 border-[#333133] bg-[#211f20]/90 pt-1 backdrop-blur-md">
        <span class="text-[52px] leading-[54px] font-bold">OpenBI</span>
        <span class="text-[36px] leading-[46px] text-[#8e8c8d]">bot</span>
      </button>
      <button type="button" aria-label="Profile" class="flex h-[132px] w-[132px] items-center justify-center justify-self-end rounded-full border-2 border-[#333133] bg-[#1a1919]">
        <span class="flex h-[114px] w-[114px] items-center justify-center rounded-full bg-linear-to-b from-[#ff8a5c] to-[#ff4f68] text-[48px] font-extrabold">O</span>
      </button>
    </nav>
  </header>
</div>
</body>
</html>
